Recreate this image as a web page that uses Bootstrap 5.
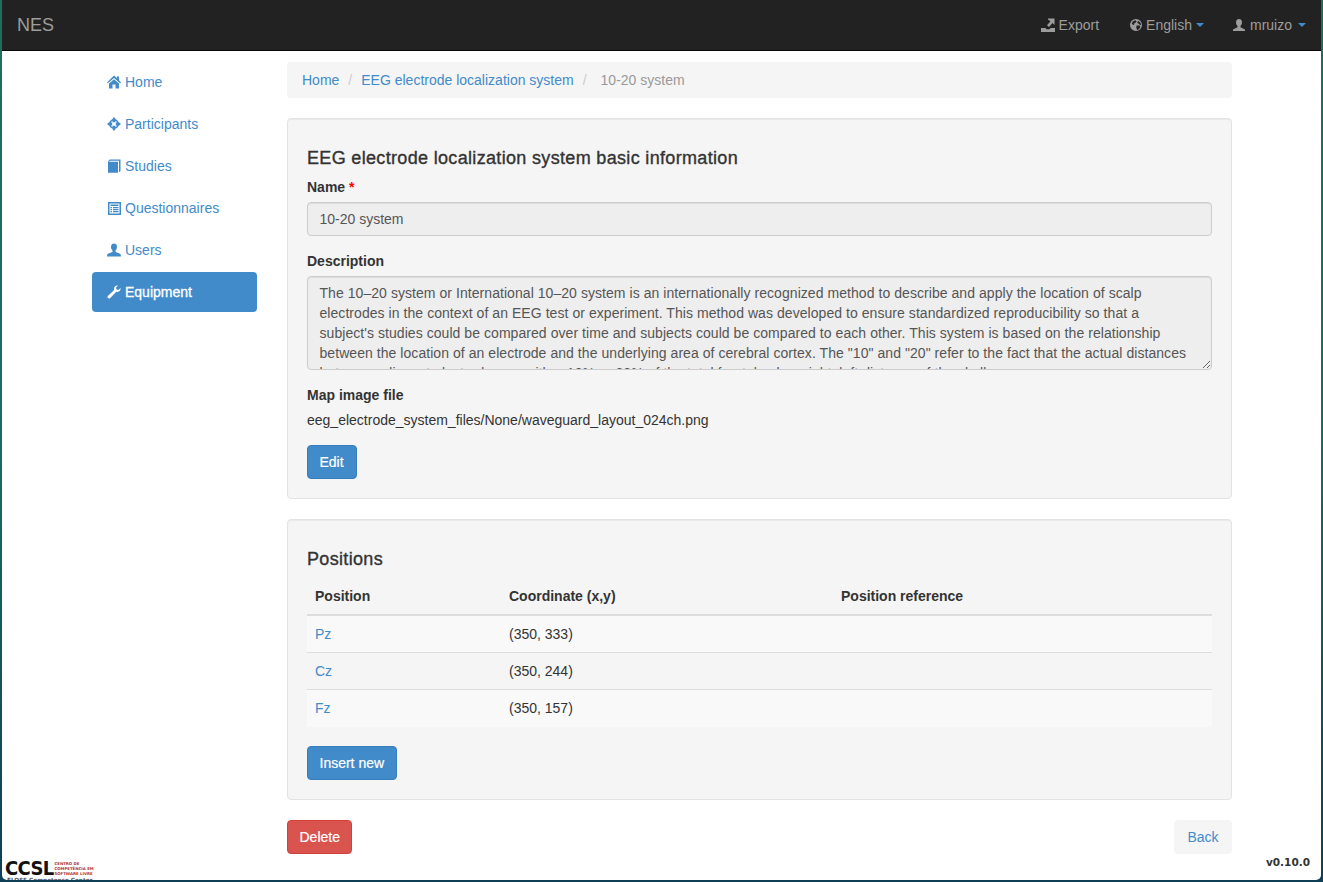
<!DOCTYPE html>
<html lang="en">
<head>
  <meta charset="UTF-8" />
  <title>NES - 10-20 system</title>
  <link rel="stylesheet" href="https://cdn.jsdelivr.net/npm/bootstrap@5.3.0/dist/css/bootstrap.min.css" />
  <style>
    html, body { height: 100%; }
    body {
      margin: 0; overflow: hidden;
      font-family: "Liberation Sans", Arial, sans-serif; font-size: 14px; line-height: 20px; color: #333;
      background: linear-gradient(180deg, #1f6f5c 0%, #1b6a6a 50%, #0f3f55 100%);
    }
    a { color: #428bca; text-decoration: none; }
    .page-frame {
      margin: 0 2px; height: 880px; background: #fff; border-radius: 0 0 5px 5px;
      overflow: hidden; display: flex; flex-direction: column;
    }
    .top-bar { height: 51px; background: #222; border-bottom: 1px solid #080808; padding: 0 15px; flex: none; }
    .top-brand { font-size: 18px; color: #9d9d9d; line-height: 50px; }
    .top-link { color: #9d9d9d; display: flex; align-items: center; gap: 4px; line-height: 50px; }
    .top-link.lang-link { gap: 3px; margin-right: -2px; }
    .top-caret { width: 0; height: 0; border-top: 4px solid #428bca; border-left: 4px solid transparent; border-right: 4px solid transparent; margin-left: 2px; }
    .lang-link .top-caret { margin-left: 1px; }
    .top-links { gap: 30px; }
    .glyph { width: 14px; height: 14px; fill: currentColor; flex: none; }
    .page-body { padding: 11px 0 0 90px; gap: 30px; flex: 1; }
    .side-menu { width: 165px; flex: none; }
    .side-menu .nav-link { height: 40px; padding: 10px 15px; color: #428bca; display: flex; align-items: center; gap: 4px; border-radius: 4px; margin-bottom: 2px; }
    .side-menu .nav-link.active { background: #428bca; color: #fff; font-weight: 400; -webkit-text-stroke: .3px #fff; }
    .main-col { width: 945px; flex: none; }
    .crumbs { background: #f5f5f5; border-radius: 4px; padding: 8px 15px; margin: 0 0 20px; height: 36px; --bs-breadcrumb-divider-color: #ccc; --bs-breadcrumb-item-active-color: #999; --bs-breadcrumb-item-padding-x: 8px; }
    .crumbs .breadcrumb-item { line-height: 20px; }
    .crumbs .breadcrumb-item + .breadcrumb-item::before { color: #ccc; padding-right: 9px; }
    .crumbs .breadcrumb-item + .breadcrumb-item { padding-left: 9px; }
    .crumbs .breadcrumb-item.active::before { padding-right: 14px; }
    .well-box { background: #f5f5f5; border: 1px solid #e3e3e3; border-radius: 4px; padding: 19px; margin-bottom: 20px; box-shadow: inset 0 1px 1px rgba(0,0,0,.05); }
    .well-title { font-size: 18px; font-weight: 400; line-height: 20px; color: #333; margin: 10px 0 9px; letter-spacing: .33px; -webkit-text-stroke: .35px #333; font-family: "Liberation Sans", Arial, sans-serif; }
    .field-label { font-weight: 700; line-height: 20px; margin-bottom: 5px; display: block; }
    .field-label i { color: #f00; font-style: normal; }
    .flat-input { height: 34px; padding: 6px 12px 6px 11.5px; font-size: 14px; line-height: 20px; color: #555; background: #eee; border: 1px solid #ccc; border-radius: 4px; box-shadow: inset 0 1px 1px rgba(0,0,0,.075); margin-bottom: 15px; }
    .flat-input:disabled { background: #eee; opacity: 1; }
    textarea.flat-input { height: 94px; min-height: 0; scrollbar-width: none; padding-right: 18px; letter-spacing: .056px; }
    .file-name { margin: 0 0 15px; padding-top: 0; height: 20px; }
    .plain-btn { height: 34px; padding: 6px 12px 6px 11.5px; font-size: 14px; line-height: 20px; border-radius: 4px; -webkit-text-stroke: .2px #fff; }
    .blue-btn { background: #428bca; border: 1px solid #357ebd; color: #fff; }
    .red-btn { background: #d9534f; border: 1px solid #d43f3a; color: #fff; padding-right: 11.5px; }
    .back-btn { background: #f5f5f5; border: 1px solid #f5f5f5; color: #428bca; -webkit-text-stroke: 0; padding: 6px 12.5px; }
    .pos-table { margin: 0 0 19px; --bs-table-bg: transparent; --bs-table-striped-bg: #f9f9f9; --bs-table-striped-color: #333; color: #333; table-layout: fixed; }
    .pos-table th { padding: 8px; line-height: 20px; border-bottom: 2px solid #ddd; border-top: 0; }
    .pos-table td { padding: 8px; line-height: 20px; border-top: 1px solid #ddd; border-bottom: 0; height: 37px; }
    .pos-col-a { width: 194px; }
    .pos-col-b { width: 332px; }
    .page-foot { height: 22px; flex: none; padding: 0 11px 0 3px; }
    .logo-wrap { width: 92px; padding-top: 1px; }
    .logo-mark { font-family: "DejaVu Sans Condensed", "DejaVu Sans", sans-serif; font-weight: 700; font-size: 20px; line-height: 18px; height: 18px; color: #111; letter-spacing: -.7px; }
    .logo-red { font-family: "DejaVu Sans", sans-serif; font-weight: 700; font-size: 3.900px; line-height: 5px; color: #b03030; margin: 2px 0 0 1px; white-space: nowrap; }
    .logo-sub { font-family: "DejaVu Sans", sans-serif; font-size: 5.700px; font-weight: 700; line-height: 7px; color: #555; margin-left: 2px; white-space: nowrap; }
    .version-tag { font-family: "DejaVu Sans", sans-serif; font-weight: 700; font-size: 10.500px; line-height: 14px; color: #333; margin-top: -3px; }
  </style>
</head>
<body>
  <div class="page-frame">
    <nav class="top-bar d-flex justify-content-between align-items-center">
      <a href="#" class="top-brand">NES</a>
      <div class="d-flex top-links">
        <a href="#" class="top-link"><svg class="glyph" viewBox="0 0 14 14"><path d="M0 10h4.500l1 1.300h3l1-1.300H14v4H0zM11 11.500h1.500v1.200H11zM7 .5h6.500V7l-2-2-3.500 4-2-1.800 3.500-3.900L7 1.500z"/></svg>Export</a>
        <a href="#" class="top-link lang-link"><svg class="glyph" viewBox="0 0 14 14"><path fill-rule="evenodd" d="M7 1a6 6 0 1 1 0 12A6 6 0 0 1 7 1zM4 3.200 6.300 2.300l1.300 1-1 1.400-1.300.6L5 7l-1.500-.5L2.800 5.500zM9 2.800l2.300 1.600.9 2.300-1.200.3-1.200-1.300-1.500-.7zM7.500 7.500h3.300l.5 1.700-1.800 2.300-1.500.4-.7-2.500z"/></svg>English<span class="top-caret"></span></a>
        <a href="#" class="top-link"><svg class="glyph" viewBox="0 0 14 14"><path d="M7 1c2 0 3 1.500 3 3.500 0 1.500-.7 2.800-1.500 3.500v1.300L13 11.500V13H1v-1.500l4.500-2.200V8C4.700 7.300 4 6 4 4.500 4 2.500 5 1 7 1z"/></svg>mruizo<span class="top-caret"></span></a>
      </div>
    </nav>
    <div class="page-body d-flex">
      <ul class="nav flex-column side-menu">
        <li class="nav-item"><a class="nav-link" href="#"><svg class="glyph" viewBox="0 0 14 14"><path d="M7 .5 10 3.200V1.500h2v3.600L14 7.500l-.8.8L7 3 .8 8.300 0 7.500zM7 4.300 12 8.500V13.500H8.500V9.500h-3v4H2V8.500z"/></svg>Home</a></li>
        <li class="nav-item"><a class="nav-link" href="#"><svg class="glyph" viewBox="0 0 14 14"><circle cx="7" cy="7" r="4.100" fill="none" stroke="currentColor" stroke-width="1.700"/><path d="M7 0l1.400 1.800v3.400H5.600V1.800zM7 14l1.400-1.800V8.800H5.600v3.400zM0 7l1.800 1.400h3.400V5.600H1.800zM14 7l-1.800 1.400H8.800V5.600h3.400z"/></svg>Participants</a></li>
        <li class="nav-item"><a class="nav-link" href="#"><svg class="glyph" viewBox="0 0 14 14"><path d="M1 2.800h10v11H1zM1 2.200 2.800.5H13.500V11.800l-1.500 1.700V1.800H3L1.800 2.800z"/></svg>Studies</a></li>
        <li class="nav-item"><a class="nav-link" href="#"><svg class="glyph" viewBox="0 0 14 14"><path fill-rule="evenodd" d="M1 1h13v13H1zM2.500 2.500v10h10v-10zM3.500 3.500h8V5h-8zM3.500 6h1.500v1.200H3.500zM6 6h5.500v1.200H6zM3.500 8h1.500v1.200H3.500zM6 8h5.500v1.200H6zM3.500 10h1.500v1.200H3.500zM6 10h5.500v1.200H6z"/></svg>Questionnaires</a></li>
        <li class="nav-item"><a class="nav-link" href="#"><svg class="glyph" viewBox="0 0 14 14"><path d="M7 .5c2 0 3 1.500 3 3.500 0 1.500-.7 2.800-1.500 3.500v1.500l4 1.500c.9.400 1.500 1.200 1.500 3H0c0-1.800.6-2.600 1.500-3l4-1.500V7.500C4.700 6.800 4 5.500 4 4c0-2 1-3.500 3-3.500z"/></svg>Users</a></li>
        <li class="nav-item"><a class="nav-link active" href="#"><svg class="glyph" viewBox="0 0 14 14"><path d="M13.500 3c.5 2.200-1.200 4.200-3.500 3.900-.6-.1-1 .1-1.400.5L3.300 13c-.7.700-1.700.7-2.300.1-.7-.7-.7-1.600.1-2.300l5.600-5.300c.4-.4.500-.8.400-1.400C6.800 1.800 8.800 0 11 .5L9 2.500l.5 2 2 .5z"/></svg>Equipment</a></li>
      </ul>
      <div class="main-col">
        <ol class="breadcrumb crumbs">
          <li class="breadcrumb-item"><a href="#">Home</a></li>
          <li class="breadcrumb-item"><a href="#">EEG electrode localization system</a></li>
          <li class="breadcrumb-item active">10-20 system</li>
        </ol>
        <div class="well-box">
          <h4 class="well-title">EEG electrode localization system basic information</h4>
          <label class="field-label">Name <i>*</i></label>
          <input class="form-control flat-input" disabled value="10-20 system" />
          <label class="field-label">Description</label>
          <textarea class="form-control flat-input" disabled>The 10–20 system or International 10–20 system is an internationally recognized method to describe and apply the location of scalp electrodes in the context of an EEG test or experiment. This method was developed to ensure standardized reproducibility so that a subject's studies could be compared over time and subjects could be compared to each other. This system is based on the relationship between the location of an electrode and the underlying area of cerebral cortex. The "10" and "20" refer to the fact that the actual distances between adjacent electrodes are either 10% or 20% of the total front–back or right–left distance of the skull.</textarea>
          <label class="field-label">Map image file</label>
          <p class="file-name">eeg_electrode_system_files/None/waveguard_layout_024ch.png</p>
          <button class="btn plain-btn blue-btn">Edit</button>
        </div>
        <div class="well-box">
          <h4 class="well-title">Positions</h4>
          <table class="table table-striped pos-table">
            <thead>
              <tr><th class="pos-col-a">Position</th><th class="pos-col-b">Coordinate (x,y)</th><th>Position reference</th></tr>
            </thead>
            <tbody>
              <tr><td><a href="#">Pz</a></td><td>(350, 333)</td><td></td></tr>
              <tr><td><a href="#">Cz</a></td><td>(350, 244)</td><td></td></tr>
              <tr><td><a href="#">Fz</a></td><td>(350, 157)</td><td></td></tr>
            </tbody>
          </table>
          <button class="btn plain-btn blue-btn">Insert new</button>
        </div>
        <div class="d-flex justify-content-between">
          <button class="btn plain-btn red-btn">Delete</button>
          <a href="#" class="btn plain-btn back-btn">Back</a>
        </div>
      </div>
    </div>
    <div class="page-foot d-flex justify-content-between">
      <div class="logo-wrap">
        <div class="d-flex">
          <div class="logo-mark">CCSL</div>
          <div class="logo-red">CENTRO DE<br />COMPETÊNCIA EM<br />SOFTWARE LIVRE</div>
        </div>
        <div class="logo-sub">FLOSS Competence Center</div>
      </div>
      <div class="version-tag">v0.10.0</div>
    </div>
  </div>
</body>
</html>
